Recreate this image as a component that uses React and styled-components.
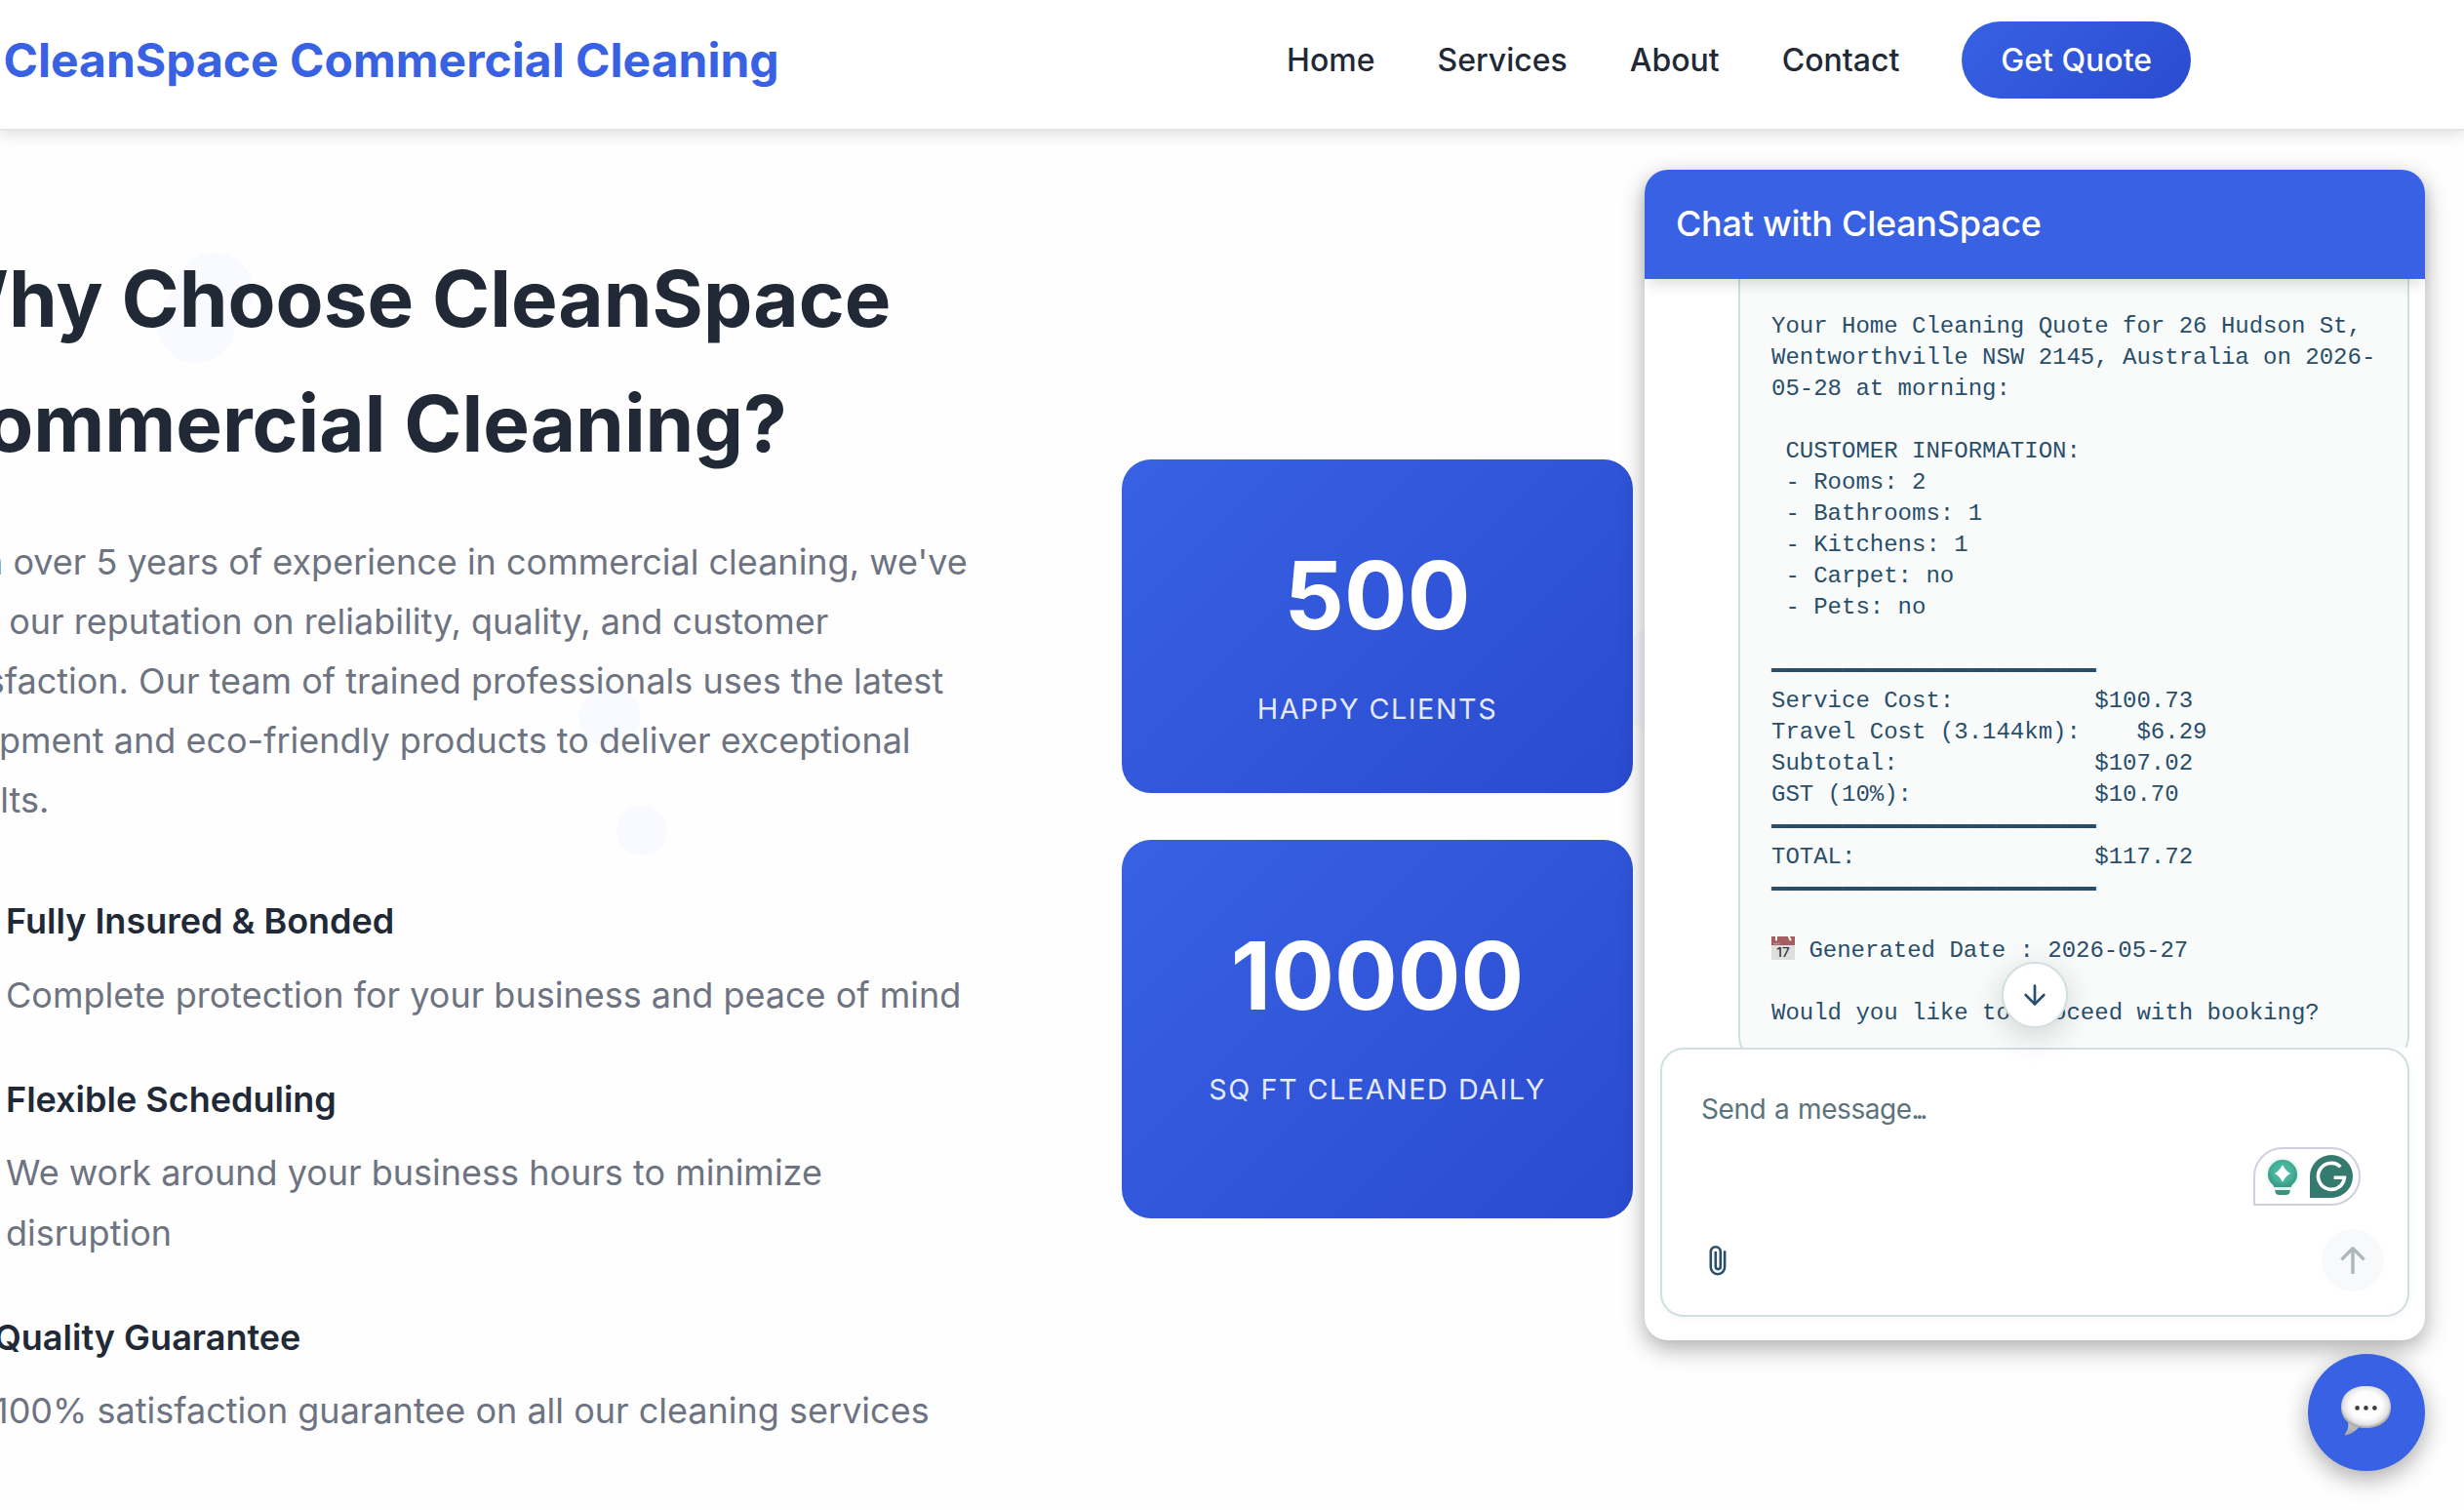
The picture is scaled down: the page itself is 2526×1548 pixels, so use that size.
import React from "react";
import styled, { createGlobalStyle } from "styled-components";
import { ArrowDown } from "lucide-react";

const GlobalStyle = createGlobalStyle`
  * { box-sizing: border-box; margin: 0; padding: 0; }
  html, body { background: #fefefe; overflow: hidden; }
  body { font-family: Inter, "Liberation Sans", sans-serif; color: #212936; }
  button { border: 0; font: inherit; }
`;

const Page = styled.div`
  position: relative;
  width: 2526px;
  height: 1548px;
  overflow: hidden;
`;

const Header = styled.header`
  position: relative;
  z-index: 2;
  display: flex;
  justify-content: space-between;
  height: 134px;
  padding: 22px 280px 0 3.5px;
  background: #fff;
  border-bottom: 2px solid #e3e5e9;
  box-shadow: 0 5px 14px rgba(0, 0, 0, 0.11);
`;

const Logo = styled.div`
  height: 79px;
  line-height: 79px;
  font-size: 48px;
  font-weight: 700;
  color: #3861e3;
  white-space: nowrap;
`;

const Nav = styled.nav`
  display: flex;
  align-items: center;
  gap: 64px;
  height: 79px;
`;

const NavLink = styled.a`
  font-size: 32px;
  font-weight: 500;
  color: #212936;
`;

const QuoteButton = styled.button`
  height: 79px;
  padding: 0 40px;
  border-radius: 40px;
  background: linear-gradient(135deg, #3861e3, #2a4bcf);
  color: #fff;
  font-size: 32px;
  font-weight: 500;
`;

const Main = styled.main`
  position: relative;
  display: flex;
  align-items: flex-start;
  height: 1414px;
  padding-top: 107.5px;
`;

const Blob = styled.span`
  position: absolute;
  left: ${(p) => p.$x - p.$r}px;
  top: ${(p) => p.$y - p.$r - 134}px;
  width: ${(p) => p.$r * 2}px;
  height: ${(p) => p.$r * 2}px;
  border-radius: 50%;
  background: #f8faff;
`;

const Copy = styled.section`
  position: relative;
  flex: none;
  width: 1150px;
`;

const Title = styled.h1`
  margin: 0 0 48px -74px;
  font-size: 80px;
  line-height: 128px;
  font-weight: 700;
  white-space: nowrap;
`;

const Lead = styled.p`
  margin: 0 0 64.4px -74px;
  font-size: 36px;
  line-height: 61.2px;
  color: #6d7380;
  white-space: nowrap;
`;

const Features = styled.ul`
  display: flex;
  flex-direction: column;
  gap: 48px;
  list-style: none;
`;

const Feature = styled.li`
  margin-left: ${(p) => p.$offset}px;
  font-size: 36px;
  white-space: nowrap;
`;

const FeatureTitle = styled.h3`
  margin-bottom: 16px;
  font-size: 36px;
  line-height: 57.6px;
  font-weight: 600;
`;

const FeatureText = styled.p`
  line-height: 61.2px;
  color: #6d7380;
`;

const Stats = styled.section`
  position: relative;
  display: flex;
  flex-direction: column;
  gap: 48px;
  width: 524px;
  margin-top: 229.5px;
`;

const StatCard = styled.div`
  padding: 63.3px 32px 62.9px;
  border-radius: 30px;
  background: linear-gradient(135deg, #3861e3, #2a4bcf);
  color: #fff;
  text-align: center;
`;

const StatNumber = styled.div`
  margin-bottom: 16px;
  font-size: 96px;
  line-height: 153.6px;
  font-weight: 700;
`;

const StatLabel = styled.div`
  min-height: ${(p) => p.$lines * 46}px;
  font-size: 28.8px;
  line-height: 46px;
  letter-spacing: 1.5px;
  text-transform: uppercase;
  white-space: nowrap;
  color: rgba(255, 255, 255, 0.9);
`;

const Chat = styled.aside`
  position: absolute;
  z-index: 3;
  right: 40px;
  top: 174px;
  display: flex;
  flex-direction: column;
  width: 800px;
  height: 1200px;
  border-radius: 24px;
  background: #fff;
  box-shadow: 0 8px 24px rgba(0, 0, 0, 0.33);
`;

const ChatHeader = styled.div`
  position: relative;
  z-index: 1;
  flex: none;
  height: 112px;
  padding: 0 32px;
  border-radius: 24px 24px 0 0;
  background: #3861e3;
  box-shadow: 0 8px 16px -4px rgba(0, 0, 0, 0.16);
  color: #fff;
  font-size: 36px;
  font-weight: 500;
  letter-spacing: -0.28px;
  line-height: 111px;
`;

const Messages = styled.div`
  position: relative;
  flex: none;
  height: 788px;
  padding: 0 16px 0 96px;
  overflow: hidden;
`;

const Bubble = styled.div`
  padding: 32.5px 32px 30.5px;
  border: 2px solid #d0dfe2;
  border-top: 0;
  border-radius: 0 0 24px 24px;
  background: #f9fbfa;
  color: #294e6a;
  font-family: "Liberation Mono", "DejaVu Sans Mono", monospace;
  font-size: 24px;
`;

const Line = styled.div`
  height: 32px;
  line-height: ${(p) => (p.$rule ? 36 : 32)}px;
  white-space: pre;
`;

const CalendarBox = styled.svg`
  width: 24px;
  height: 24px;
  vertical-align: -3px;
`;

const ScrollButton = styled.button`
  position: absolute;
  z-index: 2;
  left: 366px;
  top: 812px;
  display: flex;
  align-items: center;
  justify-content: center;
  width: 68px;
  height: 68px;
  border: 2px solid #d0dfe2;
  border-radius: 50%;
  background: #fff;
  color: #294e6a;
  box-shadow: 0 8px 32px rgba(0, 0, 0, 0.16);
`;

const Composer = styled.div`
  display: flex;
  flex-direction: column;
  justify-content: space-between;
  height: 276px;
  margin: 0 16px;
  padding: 40px 24px 24px 40px;
  border: 2px solid #d0dfe2;
  border-radius: 24px;
  background: #fff;
  box-shadow: 0 2px 6px rgba(0, 0, 0, 0.04);
`;

const Placeholder = styled.div`
  font-size: 28px;
  line-height: 42px;
  letter-spacing: -0.45px;
  word-spacing: 1.4px;
  color: #5c737c;
`;

const Dots = styled.span`
  letter-spacing: -3.8px;
`;

const ComposerActions = styled.div`
  display: flex;
  align-items: center;
  justify-content: space-between;
`;

const ClipIcon = styled.svg`
  width: 32px;
  height: 32px;
  margin-left: 4px;
`;

const SendButton = styled.button`
  display: flex;
  align-items: center;
  justify-content: center;
  width: 64px;
  height: 64px;
  border-radius: 50%;
  background: #f7f9fb;
`;

const Assistant = styled.div`
  position: absolute;
  left: 624px;
  top: 1002px;
  width: 110px;
  height: 60px;
  border: 2px solid #cfcfe0;
  border-radius: 30px 30px 30px 0;
  background: #fff;
`;

const AssistantArt = styled.svg`
  display: block;
  margin: -2px;
`;

const Launcher = styled.button`
  position: absolute;
  z-index: 3;
  right: 40px;
  bottom: 40px;
  display: flex;
  align-items: center;
  justify-content: center;
  width: 120px;
  height: 120px;
  padding: 0 2px 5px 0;
  border-radius: 50%;
  background: #3861e3;
  box-shadow: 0 8px 24px rgba(0, 0, 0, 0.33);
`;

const blobs = [
  [220, 299, 40],
  [201, 332, 40],
  [625, 735, 31],
  [658, 851, 26],
  [1715, 697, 60],
  [1420, 1229, 24],
];

const features = [
  { title: "Fully Insured & Bonded", lines: ["Complete protection for your business and peace of mind"], offset: 6 },
  { title: "Flexible Scheduling", lines: ["We work around your business hours to minimize", "disruption"], offset: 6 },
  { title: "Quality Guarantee", lines: ["100% satisfaction guarantee on all our cleaning services"], offset: -6 },
];

const rule = "━".repeat(23);

const quote = [
  "Your Home Cleaning Quote for 26 Hudson St,",
  "Wentworthville NSW 2145, Australia on 2026-",
  "05-28 at morning:",
  "",
  " CUSTOMER INFORMATION:",
  " - Rooms: 2",
  " - Bathrooms: 1",
  " - Kitchens: 1",
  " - Carpet: no",
  " - Pets: no",
  "",
  rule,
  "Service Cost:          $100.73",
  "Travel Cost (3.144km):    $6.29",
  "Subtotal:              $107.02",
  "GST (10%):             $10.70",
  rule,
  "TOTAL:                 $117.72",
  rule,
  "",
];

function Calendar() {
  return (
    <CalendarBox viewBox="0 0 24 24">
      <rect width="24" height="24" fill="#dedede" />
      <rect width="24" height="9" fill="#a55e5f" />
      <path d="M5 0.5v3M18 0.5l1.5 3" stroke="#fff" strokeWidth="2" strokeLinecap="round" />
      <path d="M2 7.5h7" stroke="#c99a9a" strokeWidth="1.6" strokeDasharray="1.6 0.8" />
      <text x="12" y="21.4" textAnchor="middle" fontFamily="Inter, sans-serif" fontSize="13.5" fontWeight="500" fill="#333">17</text>
    </CalendarBox>
  );
}

function Paperclip() {
  return (
    <ClipIcon viewBox="0 0 32 32" fill="none" stroke="#294e6a" strokeWidth="2.6">
      <path d="M20.1 6.200v16.900a7.150 7.150 0 0 1-14.300 0V7.200a5 5 0 0 1 10 0v15.400a2.500 2.500 0 0 1-5 0V7" />
    </ClipIcon>
  );
}

function SendArrow() {
  return (
    <svg width="32" height="32" viewBox="0 0 32 32" fill="none" stroke="#adb8bc" strokeWidth="3.4">
      <path d="M16 30V4" />
      <path d="M4.4 15.4 16 3.8l11.6 11.6" strokeLinejoin="round" />
    </svg>
  );
}

function AssistantMarks() {
  return (
    <AssistantArt width="110" height="60" viewBox="0 0 110 60">
      <defs>
        <radialGradient id="bulb" cx="50%" cy="45%" r="55%">
          <stop offset="0" stopColor="#49c0a5" />
          <stop offset="0.6" stopColor="#44b49b" />
          <stop offset="1" stopColor="#3d9784" />
        </radialGradient>
        <filter id="glow" x="-40%" y="-40%" width="180%" height="180%">
          <feGaussianBlur stdDeviation="2.4" />
        </filter>
      </defs>
      <circle cx="30" cy="28" r="15" fill="#44b49b" opacity="0.35" filter="url(#glow)" />
      <path d="M30 13a15 15 0 0 1 15 15c0 5-2.400 8-5 10.600-1 1-1 2.400-1.600 2.400H21.600c-.6 0-.6-1.400-1.600-2.400C17.400 36 15 33 15 28a15 15 0 0 1 15-15z" fill="url(#bulb)" />
      <path d="M22.300 44h15.400v1a4.500 4.500 0 0 1-4.500 4h-6.400a4.500 4.500 0 0 1-4.500-4z" fill="#3b9281" />
      <path d="M30 18.500c1 0 1.600 5.200 8.300 8.500-6.700 3.300-7.300 8.500-8.300 8.500s-1.600-5.200-8.300-8.500c6.700-3.300 7.300-8.500 8.300-8.500z" fill="#fff" />
      <path d="M58 52V30a22 22 0 1 1 22 22z" fill="#357a6e" />
      <path d="M89.400 20.200a13.500 13.500 0 1 0 4 11H82.600" fill="none" stroke="#fff" strokeWidth="3.600" />
    </AssistantArt>
  );
}

function SpeechBubble() {
  return (
    <svg width="52" height="52" viewBox="0 0 52 52">
      <defs>
        <radialGradient id="speech" cx="50%" cy="46%" r="56%">
          <stop offset="0.58" stopColor="#fdfdfd" />
          <stop offset="0.82" stopColor="#e2e2e2" />
          <stop offset="1" stopColor="#8f8f8f" />
        </radialGradient>
        <linearGradient id="tail" x1="0" y1="0" x2="0" y2="1">
          <stop offset="0" stopColor="#d0d0d0" />
          <stop offset="1" stopColor="#a4a4a4" />
        </linearGradient>
      </defs>
      <path d="M8 36c1 6 0 10-3 14-.5 1 .2 1.600 1.200 1.300C12 50 16 47 20 42z" fill="url(#tail)" />
      <path d="M26.500 1C42 1 52 9 52 22.500S42 44 26.500 44 1 36 1 22.500 11 1 26.500 1z" fill="url(#speech)" />
      <g fill="#3c3c3c">
        <circle cx="17.600" cy="23.400" r="2.300" />
        <circle cx="26.500" cy="23.400" r="2.300" />
        <circle cx="35.400" cy="23.400" r="2.300" />
      </g>
    </svg>
  );
}

export default function App() {
  return (
    <Page>
      <GlobalStyle />
      <Header>
        <Logo>CleanSpace Commercial Cleaning</Logo>
        <Nav>
          <NavLink>Home</NavLink>
          <NavLink>Services</NavLink>
          <NavLink>About</NavLink>
          <NavLink>Contact</NavLink>
          <QuoteButton>Get Quote</QuoteButton>
        </Nav>
      </Header>
      <Main>
        {blobs.map(([x, y, r]) => (
          <Blob key={`${x}-${y}`} $x={x} $y={y} $r={r} />
        ))}
        <Copy>
          <Title>
            Why Choose CleanSpace
            <br />
            Commercial Cleaning?
          </Title>
          <Lead>
            With over 5 years of experience in commercial cleaning, we've
            <br />
            built our reputation on reliability, quality, and customer
            <br />
            satisfaction. Our team of trained professionals uses the latest
            <br />
            equipment and eco-friendly products to deliver exceptional
            <br />
            results.
          </Lead>
          <Features>
            {features.map((f) => (
              <Feature key={f.title} $offset={f.offset}>
                <FeatureTitle>{f.title}</FeatureTitle>
                {f.lines.map((line) => (
                  <FeatureText key={line}>{line}</FeatureText>
                ))}
              </Feature>
            ))}
          </Features>
        </Copy>
        <Stats>
          <StatCard>
            <StatNumber>500</StatNumber>
            <StatLabel $lines={1}>Happy Clients</StatLabel>
          </StatCard>
          <StatCard>
            <StatNumber>10000</StatNumber>
            <StatLabel $lines={2}>Sq Ft Cleaned Daily</StatLabel>
          </StatCard>
        </Stats>
      </Main>
      <Chat>
        <ChatHeader>Chat with CleanSpace</ChatHeader>
        <Messages>
          <Bubble>
            {quote.map((line, i) => (
              <Line key={i} $rule={line === rule}>
                {line}
              </Line>
            ))}
            <Line>
              <Calendar /> Generated Date : 2026-05-27
            </Line>
            <Line />
            <Line>Would you like to proceed with booking?</Line>
          </Bubble>
        </Messages>
        <Composer>
          <Placeholder>
            Send a message<Dots>...</Dots>
          </Placeholder>
          <ComposerActions>
            <Paperclip />
            <SendButton>
              <SendArrow />
            </SendButton>
          </ComposerActions>
        </Composer>
        <ScrollButton>
          <ArrowDown size={32} strokeWidth={2} />
        </ScrollButton>
        <Assistant>
          <AssistantMarks />
        </Assistant>
      </Chat>
      <Launcher>
        <SpeechBubble />
      </Launcher>
    </Page>
  );
}
